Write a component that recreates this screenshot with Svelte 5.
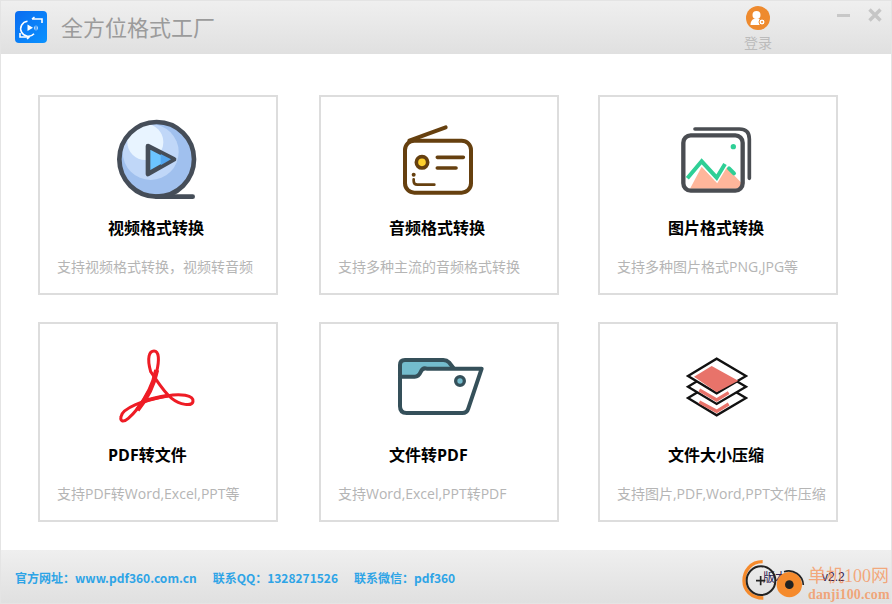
<script>
  const cards = [
    { id: 'video', box: '24 15 360 270', title: '视频格式转换', desc: '支持视频格式转换\uFF0C视频转音频' },
    { id: 'audio', box: '-3 15 360 270', title: '音频格式转换', desc: '支持多种主流的音频格式转换' },
    { id: 'image', box: '-6 15 360 270', title: '图片格式转换', desc: '支持多种图片格式PNG,JPG等' },
    { id: 'pdf', box: '-6 6 360 270', title: 'PDF转文件', desc: '支持PDF转Word,Excel,PPT等' },
    { id: 'file', box: '-3 6 360 270', title: '文件转PDF', desc: '支持Word,Excel,PPT转PDF' },
    { id: 'zip', box: '-6 6 360 270', title: '文件大小压缩', desc: '支持图片,PDF,Word,PPT文件压缩' }
  ];
  const links = [
    { label: '官方网址\uFF1A', value: 'www.pdf360.com.cn' },
    { label: '联系QQ\uFF1A', value: '1328271526' },
    { label: '联系微信\uFF1A', value: 'pdf360' }
  ];
</script>

<div class="shell">
  <header class="top">
    <svg class="logo" viewBox="0 0 32 32" aria-hidden="true">
      <defs>
        <linearGradient id="lg" x1="0" y1="0" x2="1" y2="1">
          <stop offset="0" stop-color="#0a6cf0" />
          <stop offset="1" stop-color="#0a92ff" />
        </linearGradient>
      </defs>
      <rect width="32" height="32" rx="4" fill="url(#lg)" />
      <path d="M12.5 10.2a7.6 7.6 0 1 0 6.5 12.6" fill="none" stroke="#fff" stroke-width="1.6" />
      <path d="M12.5 13.5v6.5l5.5-3.2z" fill="#fff" />
      <path d="M19.5 15.5v3M21 14.5v5M22.5 15.5v3" stroke="#cfe4ff" stroke-width="0.8" />
      <path d="M17 8h10v4M17 8l2.5-2" fill="none" stroke="#fff" stroke-width="1.6" />
      <path d="M5 22v4h9.5M14.5 26l-2.5 2" fill="none" stroke="#fff" stroke-width="1.6" />
    </svg>
    <h1 class="app-name">全方位格式工厂</h1>
    <div class="login">
      <svg viewBox="0 0 24 24" width="24" height="24" aria-hidden="true">
        <circle cx="12" cy="12" r="12" fill="#ee8a2e" />
        <circle cx="10.5" cy="9" r="4" fill="#fff" />
        <path d="M4.5 19c0-4.5 2.5-6.5 6-6.5 2 0 3 .6 4 1.5l-1 5z" fill="#fff" />
        <circle cx="16" cy="16" r="3" fill="#fff" stroke="#ee8a2e" stroke-width="1" />
        <circle cx="16" cy="16" r="1" fill="#ee8a2e" />
      </svg>
      <span>登录</span>
    </div>
    <div class="win-btns">
      <span class="min"></span>
      <svg viewBox="0 0 14 14" width="14" height="14" aria-hidden="true">
        <path d="M1.5 1.5l11 11M12.5 1.5l-11 11" stroke="#c6c6c6" stroke-width="3.4" />
      </svg>
    </div>
  </header>

  <main class="grid">
    {#each cards as card}
      <section class="card">
        <svg class="icon" viewBox={card.box} width="120" height="90" aria-hidden="true">
          {#if card.id === 'video'}
            <circle cx="200" cy="148" r="112" fill="#a0c0ee" />
            <circle cx="182" cy="126" r="84" fill="#c0d7f8" />
            <circle cx="166" cy="96" r="54" fill="#e8f4ff" />
            <path d="M200 260H308" stroke="#454d58" stroke-width="14" stroke-linecap="round" />
            <circle cx="200" cy="148" r="112" fill="none" stroke="#454d58" stroke-width="14" />
            <path d="M174 108L252 148 174 192z" fill="#6cc5ff" stroke="#454d58" stroke-width="14" stroke-linejoin="round" />
            <path d="M212 132L243 148 212 166z" fill="#54a6ef" />
          {:else if card.id === 'audio'}
            <g fill="none" stroke="#66400f" stroke-linecap="round">
              <path d="M88 92L197 52" stroke-width="12" />
              <rect x="75" y="92" width="198" height="156" rx="28" stroke-width="12" />
              <circle cx="126" cy="157" r="17" fill="#ffd12e" stroke-width="11" />
              <path d="M172 142H250M172 174H228" stroke-width="11" />
              <path d="M101 208v5q0 11 11 11H163" stroke-width="8" />
            </g>
            <circle cx="101" cy="194" r="6" fill="#66400f" />
          {:else if card.id === 'image'}
            <path d="M90 236L125 170 165 212 195 168 244 218V236z" fill="#ffb69b" />
            <path d="M82 205L125 154 170 203 195 162" fill="none" stroke="#fff" stroke-width="20" />
            <path d="M82 205L125 154 170 203 195 162" fill="none" stroke="#2fcf96" stroke-width="12" />
            <path d="M207 175L222 190" stroke="#2fcf96" stroke-width="12" stroke-linecap="round" />
            <circle cx="220" cy="110" r="8" fill="#2fcf96" />
            <g fill="none" stroke="#4a4d52" stroke-linecap="round">
              <rect x="70" y="76" width="178" height="166" rx="22" stroke-width="13" />
              <path d="M105 57H238q30 0 30 30V205" stroke-width="11" />
            </g>
          {:else if card.id === 'pdf'}
            <g fill="none" stroke="#ee1c25" stroke-linejoin="round">
              <path d="M152 95C140 52 148 33 162 33 178 33 178 62 170 95 160 140 120 205 85 235 70 248 60 245 63 230 67 205 130 180 200 168 240 160 282 165 279 185 276 200 240 195 215 175 190 155 170 120 152 95z" stroke-width="9" />
              <path d="M170 90C160 140 140 175 112 210" stroke-width="15" />
              <path d="M130 185C150 178 175 172 205 167" stroke-width="11" />
            </g>
          {:else if card.id === 'file'}
            <path d="M60 110V75q0-15 15-15H190q10 0 18 8l14 18H140q-12 0-18 10t-18 14z" fill="#74bccd" />
            <g fill="none" stroke="#35505a" stroke-width="12" stroke-linejoin="round">
              <path d="M60 110V75q0-15 15-15H190q10 0 18 8l14 18" />
              <path d="M60 110H104q12 0 18-14t18-10H305L265 205q-4 14-18 14H80q-20 0-20-20z" />
              <circle cx="240" cy="123" r="13" fill="#74bccd" stroke-width="10" />
            </g>
          {:else if card.id === 'zip'}
            <g stroke="#111" stroke-width="7" stroke-linejoin="miter">
              <path d="M84 174L170 122 258 174 170 226z" fill="#fff" />
              <path d="M118 186L170 214 206 192" fill="none" stroke="#e8736a" stroke-width="10" />
              <path d="M84 140L170 88 258 140 170 192z" fill="#fff" />
              <path d="M118 150L170 180 206 158" fill="none" stroke="#e8736a" stroke-width="10" />
              <path d="M84 108L170 56 258 108 170 160z" fill="#fff" />
            </g>
            <path d="M155 78L235 122 170 157 102 110z" fill="#e8736a" />
          {/if}
        </svg>
        <h2>{card.title}</h2>
        <p>{card.desc}</p>
      </section>
    {/each}
  </main>

  <footer class="bottom">
    {#each links as link}
      <span>{link.label}{link.value}</span>
    {/each}
    <div class="stamp">
      <span class="version">版本</span>
      <svg viewBox="0 0 270 192" width="90" height="64" aria-hidden="true">
        <path d="M128 68C92 68 72 96 72 125s22 52 58 52" fill="none" stroke="#f58a2c" stroke-width="10" />
        <circle cx="123" cy="125" r="43" fill="none" stroke="#222" stroke-width="6" />
        <path d="M108 125H136M122 111V139" stroke="#222" stroke-width="5" />
        <circle cx="208" cy="137" r="38" fill="#f58a2c" />
        <path d="M192 98a44 44 0 0 1 58 40" fill="none" stroke="#222" stroke-width="5" />
        <circle cx="208" cy="137" r="13" fill="#222" />
      </svg>
      <span class="ver-num">v2.2</span>
      <div class="mark">
        <b>单机100网</b>
        <i>danji100.com</i>
      </div>
    </div>
  </footer>
</div>

<style>
  :global(body) {
    margin: 0;
    background: #fff;
  }

  .shell {
    box-sizing: border-box;
    width: 892px;
    height: 604px;
    display: flex;
    flex-direction: column;
    border: 1px solid #e4e4e4;
    font-family: "Noto Sans CJK SC", "Noto Sans", sans-serif;
  }

  .top {
    height: 53px;
    display: flex;
    align-items: center;
    padding-left: 14px;
    background: linear-gradient(#efefef, #e0e0e0);
  }

  .logo {
    width: 32px;
    height: 32px;
    margin-top: -2px;
  }

  .app-name {
    margin: -3px 0 0 14px;
    font-size: 22px;
    font-weight: 400;
    line-height: 30px;
    color: #9b9b9b;
  }

  .login {
    margin-left: auto;
    width: 28px;
    height: 53px;
    display: flex;
    flex-direction: column;
    align-items: center;
    padding-top: 5px;
    box-sizing: border-box;
  }

  .login span {
    margin-top: 2px;
    font-size: 14px;
    line-height: 20px;
    color: #bbb;
    white-space: nowrap;
  }

  .win-btns {
    width: 48px;
    height: 53px;
    margin-left: 62px;
    margin-right: 9px;
    display: flex;
    gap: 18px;
    padding-top: 7px;
    box-sizing: border-box;
    justify-content: flex-end;
  }

  .min {
    width: 13px;
    height: 3px;
    margin-top: 6px;
    background: #c8c8c8;
  }

  .grid {
    flex: 1;
    display: grid;
    grid-template-columns: 281px 279px 240px;
    grid-auto-rows: 200px;
    row-gap: 27px;
    padding: 41px 0 0 37px;
    align-content: start;
  }

  .card {
    box-sizing: border-box;
    width: 240px;
    height: 200px;
    border: 2px solid #ddd;
    padding: 18px 0 0 17px;
  }

  .icon {
    display: block;
    margin-left: 41px;
  }

  h2 {
    margin: 11px 0 0 51px;
    font-family: "Open Sans", "Noto Sans CJK SC", sans-serif;
    font-size: 16px;
    font-weight: 700;
    line-height: 24px;
    color: #000;
  }

  p {
    margin: 17px 0 0;
    font-family: "Open Sans", "Noto Sans CJK SC", sans-serif;
    font-size: 14px;
    line-height: 20px;
    color: #b5b5b5;
    white-space: nowrap;
  }

  .bottom {
    position: relative;
    height: 53px;
    display: flex;
    align-items: center;
    gap: 16px;
    padding: 2px 0 0 14px;
    box-sizing: border-box;
    background: linear-gradient(#efefef, #e0e0e0);
    font-size: 12px;
    font-weight: 700;
    color: #2ea4e6;
  }

  .stamp {
    position: absolute;
    left: 719px;
    top: -11px;
    width: 172px;
    height: 64px;
    pointer-events: none;
  }

  .stamp svg {
    position: absolute;
    left: 0;
    top: 0;
  }

  .version,
  .ver-num {
    position: absolute;
    top: 29px;
    font-size: 12px;
    font-weight: 400;
    line-height: 18px;
    color: #2a2050;
  }

  .version {
    left: 43px;
  }

  .ver-num {
    left: 102px;
    font-family: "Liberation Sans", sans-serif;
  }

  .mark {
    position: absolute;
    left: 88px;
    top: 26px;
    display: flex;
    flex-direction: column;
    font-family: "Liberation Serif", "Noto Sans CJK SC", serif;
    color: rgba(248, 130, 60, 0.65);
    white-space: nowrap;
  }

  .mark b {
    font-size: 18px;
    font-weight: 400;
    line-height: 22px;
  }

  .mark i {
    font-size: 14px;
    font-style: normal;
    line-height: 16px;
    letter-spacing: 0.1px;
  }
</style>
